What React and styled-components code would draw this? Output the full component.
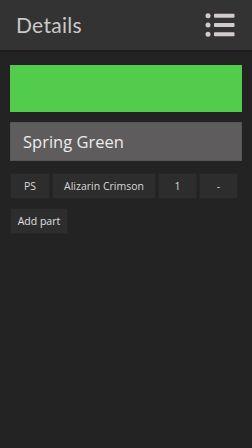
import React from "react";
import styled, { createGlobalStyle } from "styled-components";

const Global = createGlobalStyle`
  html, body { margin: 0; padding: 0; background: #232323; }
  body { font-family: "Open Sans", "Noto Sans", sans-serif; }
  #root { min-height: 448px; background: #232323; }
`;

const Header = styled.header`
  height: 50px;
  background: #333333;
  display: flex;
  align-items: center;
  justify-content: space-between;
  padding: 0 16px 0 16px;
  box-sizing: border-box;
  box-shadow: 0 2px 0 #1d1d1d;
`;

const Title = styled.h1`
  margin: 0;
  font-family: "Lato", "Open Sans", sans-serif;
  font-weight: 400;
  font-size: 21px;
  color: #c9c9c9;
  letter-spacing: 0.3px;
  margin-top: -1px;
`;

const MenuButton = styled.button`
  border: none;
  background: transparent;
  padding: 0;
  width: 32px;
  height: 28px;
  display: flex;
  align-items: center;
  justify-content: center;
`;

const Content = styled.main`
  padding: 15px 10px 10px 10px;
  display: flex;
  flex-direction: column;
`;

const Swatch = styled.div`
  height: 47px;
  background: ${(p) => p.color};
`;

const NameBox = styled.div`
  margin-top: 10px;
  height: 39px;
  background: #5e5c5d;
  border: 1px solid #555;
  box-sizing: border-box;
  display: flex;
  align-items: center;
  padding-left: 12px;
  font-size: 16.5px;
  color: #ebebeb;
`;

const PartRow = styled.div`
  margin-top: 12px;
  display: grid;
  grid-template-columns: 40px 104px 39px 39px;
  gap: 2px;
`;

const Cell = styled.div`
  height: 26px;
  background: #2d2d2d;
  border: 1px solid #262626;
  box-sizing: border-box;
  display: flex;
  align-items: center;
  justify-content: center;
  font-size: 10.5px;
  color: #d8d8d8;
`;

const AddButton = styled.button`
  margin-top: 9px;
  align-self: flex-start;
  height: 26px;
  width: 58px;
  background: #2d2d2d;
  border: 1px solid #262626;
  box-sizing: border-box;
  color: #e0e0e0;
  font-family: "Open Sans", sans-serif;
  font-size: 10.5px;
  padding: 0;
`;

function ListIcon() {
  return (
    <svg width="32" height="28" viewBox="0 0 32 28">
      {[4.8, 14, 23.3].map((y) => (
        <g key={y} fill="#d2cacd">
          <circle cx="4" cy={y} r="2.5" />
          <rect x="10" y={y - 2} width="20.5" height="4" rx="0.8" />
        </g>
      ))}
    </svg>
  );
}

export default function App() {
  return (
    <>
      <Global />
      <Header>
        <Title>Details</Title>
        <MenuButton aria-label="menu">
          <ListIcon />
        </MenuButton>
      </Header>
      <Content>
        <Swatch color="#53cc4d" />
        <NameBox>Spring Green</NameBox>
        <PartRow>
          <Cell>PS</Cell>
          <Cell>Alizarin Crimson</Cell>
          <Cell>1</Cell>
          <Cell>-</Cell>
        </PartRow>
        <AddButton>Add part</AddButton>
      </Content>
    </>
  );
}
